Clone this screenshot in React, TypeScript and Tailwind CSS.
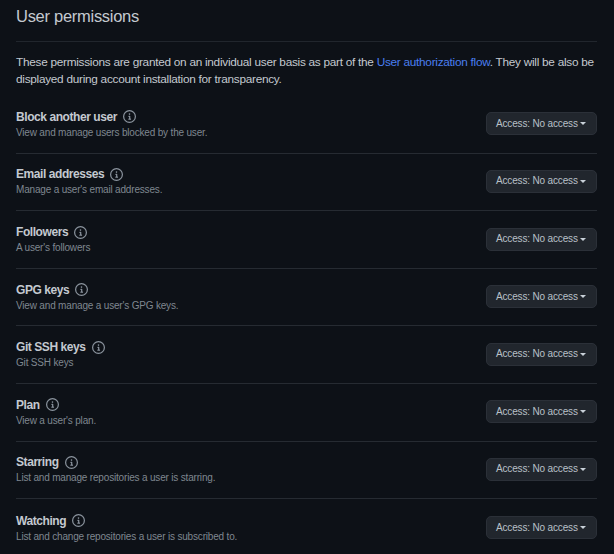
import React from "react";

const permissions = [
  { name: "Block another user", description: "View and manage users blocked by the user." },
  { name: "Email addresses", description: "Manage a user's email addresses." },
  { name: "Followers", description: "A user's followers" },
  { name: "GPG keys", description: "View and manage a user's GPG keys." },
  { name: "Git SSH keys", description: "Git SSH keys" },
  { name: "Plan", description: "View a user's plan." },
  { name: "Starring", description: "List and manage repositories a user is starring." },
  { name: "Watching", description: "List and change repositories a user is subscribed to." },
];

function InfoIcon() {
  return (
    <svg viewBox="0 0 16 16" className="size-[13px] shrink-0 fill-[#8b949e]" aria-hidden="true">
      <path d="M8 1.5a6.5 6.5 0 1 0 0 13 6.5 6.5 0 0 0 0-13ZM0 8a8 8 0 1 1 16 0A8 8 0 0 1 0 8Zm6.5-.25A.75.75 0 0 1 7.25 7h1a.75.75 0 0 1 .75.75v2.75h.25a.75.75 0 0 1 0 1.5h-2a.75.75 0 0 1 0-1.5h.25v-2h-.25a.75.75 0 0 1-.75-.75ZM8 6a1 1 0 1 1 0-2 1 1 0 0 1 0 2Z" />
    </svg>
  );
}

function AccessButton() {
  return (
    <button className="flex h-[23px] w-[111px] shrink-0 items-center gap-[2px] whitespace-nowrap rounded-[5px] border border-[#2b3038] bg-[#21262d] pl-[9px] text-[10px] leading-4 tracking-[-0.16px] text-[#b9c0c8]">
      Access: No access
      <span className="border-x-[3px] border-t-[3px] border-x-transparent border-t-[#c9d1d9]" />
    </button>
  );
}

export default function App() {
  return (
    <main className="h-[554px] overflow-hidden bg-[#0d1117] pl-4 pr-[17px] font-['Liberation_Sans',Arial,sans-serif] text-[#c4c9d0]">
      <h2 className="h-[42px] border-b border-[#21262d] pt-1 text-[16.5px] leading-6 tracking-[-0.28px]">User permissions</h2>
      <p className="h-[54px] whitespace-nowrap pt-3 text-[11.8px] leading-[17px] tracking-[-0.27px]">
        These permissions are granted on an individual user basis as part of the{" "}
        <a className="text-[#4a7ff0]">User authorization flow</a>. They will be also be
        <br />
        displayed during account installation for transparency.
      </p>
      <ul>
        {permissions.map((item) => (
          <li key={item.name} className="flex h-[57.6px] items-center justify-between border-b border-[#262b32] pb-[0.9px] last:border-b-0">
            <div>
              <h3 className="flex items-center gap-[6px] pt-px text-[12px] font-bold leading-4 tracking-[-0.43px]">
                {item.name}
                <InfoIcon />
              </h3>
              <p className="text-[10px] leading-[15px] tracking-[-0.18px] text-[#7f8790]">{item.description}</p>
            </div>
            <AccessButton />
          </li>
        ))}
      </ul>
    </main>
  );
}
